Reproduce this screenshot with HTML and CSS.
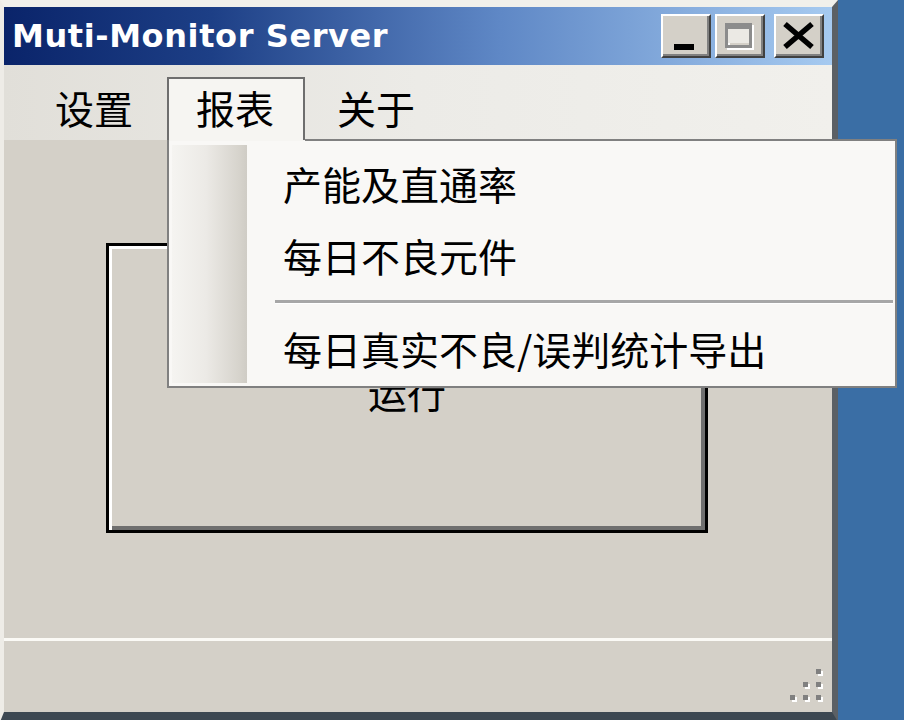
FILE: index.html
```html
<!DOCTYPE html>
<html lang="zh-CN">
<head>
<meta charset="utf-8">
<title>Muti-Monitor Server</title>
<link rel="stylesheet" href="styles.css">
</head>
<body>
<div class="desktop">
  <div class="window">
    <div class="titlebar">
      <span class="title">Muti-Monitor Server</span>
      <div class="caption-buttons">
        <button class="cbtn cbtn-min" aria-label="最小化">
          <svg viewBox="0 0 46 40" width="46" height="40"><rect x="11" y="28" width="20" height="6" fill="#000"/></svg>
        </button>
        <button class="cbtn cbtn-max" aria-label="最大化" disabled>
          <svg viewBox="0 0 46 40" width="46" height="40">
            <path d="M10 9h27v25h-27z M13 16v15h21v-15z" fill="#fff" fill-rule="evenodd"/>
            <rect x="11" y="12" width="21" height="15" fill="#ebe9e4"/>
            <path d="M8 7h27v25h-27z M11 13v16h21v-16z" fill="#8c8c8c" fill-rule="evenodd"/>
          </svg>
        </button>
        <button class="cbtn cbtn-close" aria-label="关闭">
          <svg viewBox="0 0 46 40" width="46" height="40"><path d="M9 8L36 31M36 8L9 31" stroke="#000" stroke-width="5.5"/></svg>
        </button>
      </div>
    </div>
    <div class="menubar">
      <span class="menu-item">设置</span>
      <span class="menu-item active">报表</span>
      <span class="menu-item">关于</span>
    </div>
    <div class="client">
      <div class="main">
        <button class="run-btn">运行</button>
      </div>
      <div class="statusbar">
        <svg class="grip" viewBox="0 0 36 35" width="36" height="35">
          <g fill="#fff">
            <rect x="30" y="3" width="5" height="5"/>
            <rect x="17" y="16" width="5" height="5"/><rect x="30" y="16" width="5" height="5"/>
            <rect x="4" y="29" width="5" height="5"/><rect x="17" y="29" width="5" height="5"/><rect x="30" y="29" width="5" height="5"/>
          </g>
          <g fill="#808080">
            <rect x="28" y="1" width="5" height="5"/>
            <rect x="15" y="14" width="5" height="5"/><rect x="28" y="14" width="5" height="5"/>
            <rect x="2" y="27" width="5" height="5"/><rect x="15" y="27" width="5" height="5"/><rect x="28" y="27" width="5" height="5"/>
          </g>
        </svg>
      </div>
    </div>
  </div>

  <div class="popup">
    <div class="popup-strip"></div>
    <div class="popup-items">
      <div class="popup-item">产能及直通率</div>
      <div class="popup-item">每日不良元件</div>
      <div class="popup-sep"></div>
      <div class="popup-item">每日真实不良/误判统计导出</div>
    </div>
  </div>
</div>
</body>
</html>
```

FILE: styles.css
```css
* { box-sizing: border-box; }

html, body {
  margin: 0;
  padding: 0;
}

body {
  background: #3a6ea5;
  font-family: "Noto Sans CJK SC", "Noto Sans", sans-serif;
  overflow: hidden;
}

.desktop {
  position: relative;
  width: 904px;
  height: 720px;
  overflow: hidden;
  background: #3a6ea5;
}

.window {
  width: 838px;
  height: 722px;
  display: flex;
  flex-direction: column;
  border-top: 7px solid #f1f0eb;
  border-left: 4px solid #eeece7;
  border-right: 6px solid #5b6065;
  border-bottom: 10px solid #3d4852;
  background: #d4d0c8;
}

.titlebar {
  height: 58px;
  flex: none;
  display: flex;
  align-items: center;
  padding: 0 8px 0 8px;
  background: linear-gradient(to right, #0a246a 0%, #1d3f86 25%, #5f88c6 60%, #a6caf0 100%);
}

.title {
  flex: 1;
  color: #fff;
  font-family: "DejaVu Sans", sans-serif;
  font-weight: bold;
  font-size: 32px;
  letter-spacing: 0.6px;
  white-space: nowrap;
}

.caption-buttons {
  display: flex;
  align-items: center;
  gap: 4px;
}

.cbtn {
  width: 50px;
  height: 44px;
  padding: 0;
  margin: 0;
  background: #d4d0c8;
  border: 2px solid;
  border-color: #ffffff #404040 #404040 #ffffff;
  box-shadow: inset -2px -2px 0 #808080;
  display: flex;
  align-items: center;
  justify-content: center;
}

.cbtn svg { display: block; }

.cbtn-close { margin-left: 5px; }

.menubar {
  height: 75px;
  flex: none;
  display: flex;
  align-items: flex-end;
  gap: 3px;
  padding-left: 22px;
  background: linear-gradient(to right, #e1dfd9 0%, #ecebe7 50%, #f1f0ec 100%);
}

.menu-item {
  height: 63px;
  padding: 0 29px 0 27px;
  border: 2px solid transparent;
  border-bottom: none;
  font-size: 39px;
  line-height: 56px;
  color: #000;
}

.menu-item.active {
  background: #f6f5f2;
  border-color: #6e6e6e;
  position: relative;
  z-index: 2;
}

.client {
  flex: 1;
  display: flex;
  flex-direction: column;
  background: #d4d0c8;
}

.main {
  flex: 1;
  padding: 103px 0 0 102px;
}

.run-btn {
  width: 602px;
  height: 290px;
  margin: 0;
  padding: 6px 0 0 0;
  background: #d4d0c8;
  border: 3px solid #000;
  box-shadow: inset 3px 3px 0 #ffffff, inset -4px -4px 0 #6f6f6f;
  font-family: "Noto Sans CJK SC", sans-serif;
  font-size: 39px;
  line-height: 1;
  color: #000;
}

.statusbar {
  height: 74px;
  flex: none;
  border-top: 3px solid #fbfaf6;
  display: flex;
  justify-content: flex-end;
  align-items: flex-end;
  padding: 0 8px 9px 0;
}

.grip { display: block; }

/* dropdown menu, floating over the window */
.popup {
  position: absolute;
  left: 167px;
  top: 139px;
  width: 730px;
  height: 249px;
  display: flex;
  background: #f9f8f6;
  border: 2px solid #808080;
  z-index: 1;
}

.popup::before {
  content: "";
  position: absolute;
  top: -2px;
  left: 0;
  width: 136px;
  height: 2px;
  background: #f6f5f2;
}

.popup-strip {
  width: 75px;
  flex: none;
  margin: 4px 0 3px 3px;
  background: linear-gradient(to right, #f5f4f1 0%, #eceae6 45%, #d6d3cc 90%, #cfccc5 100%);
}

.popup-items {
  flex: 1;
  padding: 6px 0 2px 0;
  display: flex;
  flex-direction: column;
}

.popup-item {
  height: 72px;
  padding-left: 36px;
  font-size: 39px;
  line-height: 72px;
  color: #000;
  white-space: nowrap;
}

.popup-sep {
  height: 21px;
  display: flex;
  align-items: center;
  padding: 0 2px 0 28px;
}

.popup-sep::before {
  content: "";
  flex: 1;
  height: 3px;
  background: #a7a7a7;
  border-bottom: 1px solid #ffffff;
}
```
